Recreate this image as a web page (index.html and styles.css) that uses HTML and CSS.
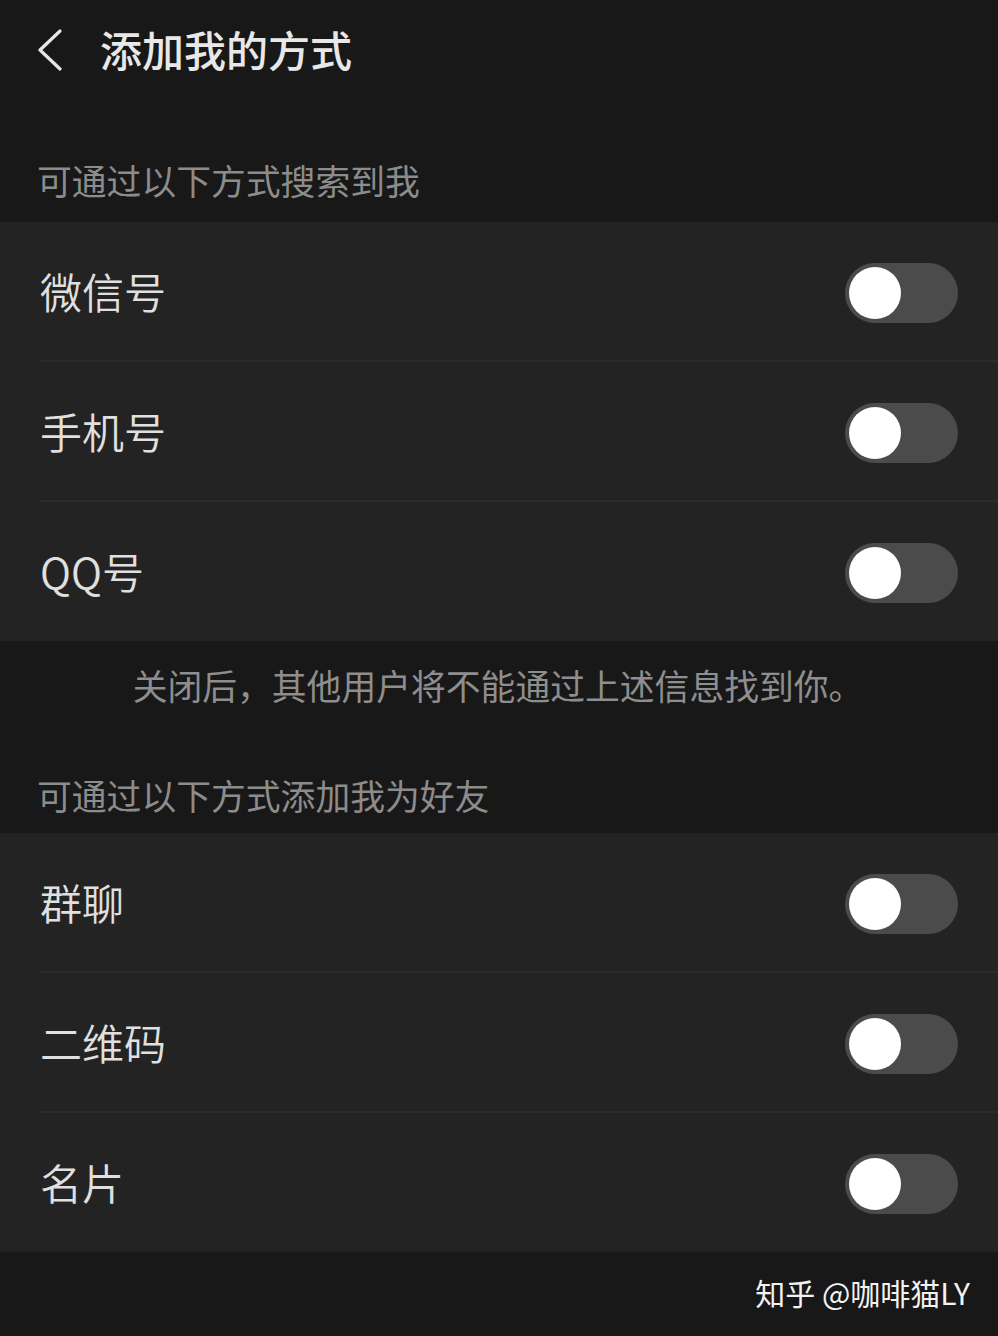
FILE: index.html
```html
<!DOCTYPE html>
<html lang="zh">

<head>
  <meta charset="UTF-8" />
  <meta name="viewport" content="width=device-width, initial-scale=1.0" />
  <title>添加我的方式</title>
  <link rel="stylesheet" href="styles.css">
</head>

<body>

  <div class="topbar">
    <svg class="back" width="26" height="42" viewBox="0 0 26 42">
      <path d="M23 2 L3 21 L23 40" fill="none" stroke="#e6e6e6" stroke-width="3.2" stroke-linecap="round" stroke-linejoin="round" />
    </svg>
    <h1>添加我的方式</h1>
  </div>

  <p class="section-label">可通过以下方式搜索到我</p>
  <div class="group">
    <div class="row"><span>微信号</span><div class="switch"><i></i></div></div>
    <div class="row"><span>手机号</span><div class="switch"><i></i></div></div>
    <div class="row"><span>QQ号</span><div class="switch"><i></i></div></div>
  </div>

  <p class="note">关闭后，其他用户将不能通过上述信息找到你。</p>

  <p class="section-label">可通过以下方式添加我为好友</p>
  <div class="group">
    <div class="row"><span>群聊</span><div class="switch"><i></i></div></div>
    <div class="row"><span>二维码</span><div class="switch"><i></i></div></div>
    <div class="row"><span>名片</span><div class="switch"><i></i></div></div>
  </div>

  <div class="watermark">知乎 @咖啡猫LY</div>

</body>

</html>
```

FILE: styles.css
```css
* {
  margin: 0;
  padding: 0;
  box-sizing: border-box;
}

body {
  font-family: "Noto Sans CJK SC", "Noto Sans", sans-serif;
  background: #181818;
  color: #e2e2e2;
  width: 998px;
  height: 1336px;
  overflow: hidden;
}

.topbar {
  display: flex;
  align-items: center;
  height: 104px;
  padding-left: 37px;
}

.back {
  display: block;
  margin-top: -4px;
}

.topbar h1 {
  font-size: 42px;
  font-weight: 500;
  color: #e8e8e8;
  margin-left: 37px;
  line-height: 1;
  margin-top: -6px;
}

.section-label {
  font-size: 34.8px;
  color: #8c8c8c;
  padding: 56px 0 0 37px;
  height: 118px;
  line-height: 1.2;
}

.group {
  background: #232323;
}

.row {
  display: flex;
  align-items: center;
  justify-content: space-between;
  height: 140px;
  margin-left: 40px;
  padding-right: 40px;
  border-bottom: 2px solid #2b2b2b;
  font-size: 42px;
  font-weight: 350;
  color: #e0e0e0;
}

.row:last-child {
  border-bottom: none;
  height: 139px;
}

.row span {
  margin-top: -2px;
}

.switch {
  width: 113px;
  height: 60px;
  border-radius: 30px;
  background: #4b4b4b;
  padding: 4px;
  margin-top: 3px;
}

.switch i {
  display: block;
  width: 52px;
  height: 52px;
  border-radius: 50%;
  background: #fff;
}

.note {
  font-size: 34.8px;
  color: #8e8e8e;
  text-align: center;
  padding-top: 24px;
  height: 110px;
  line-height: 1.2;
  padding-right: 2px;
}

.note + .section-label {
  padding-top: 24px;
  height: 82px;
}

.watermark {
  text-align: right;
  padding: 22px 28px 0 0;
  font-size: 30px;
  color: #f2f2f2;
  line-height: 1.2;
}
```
